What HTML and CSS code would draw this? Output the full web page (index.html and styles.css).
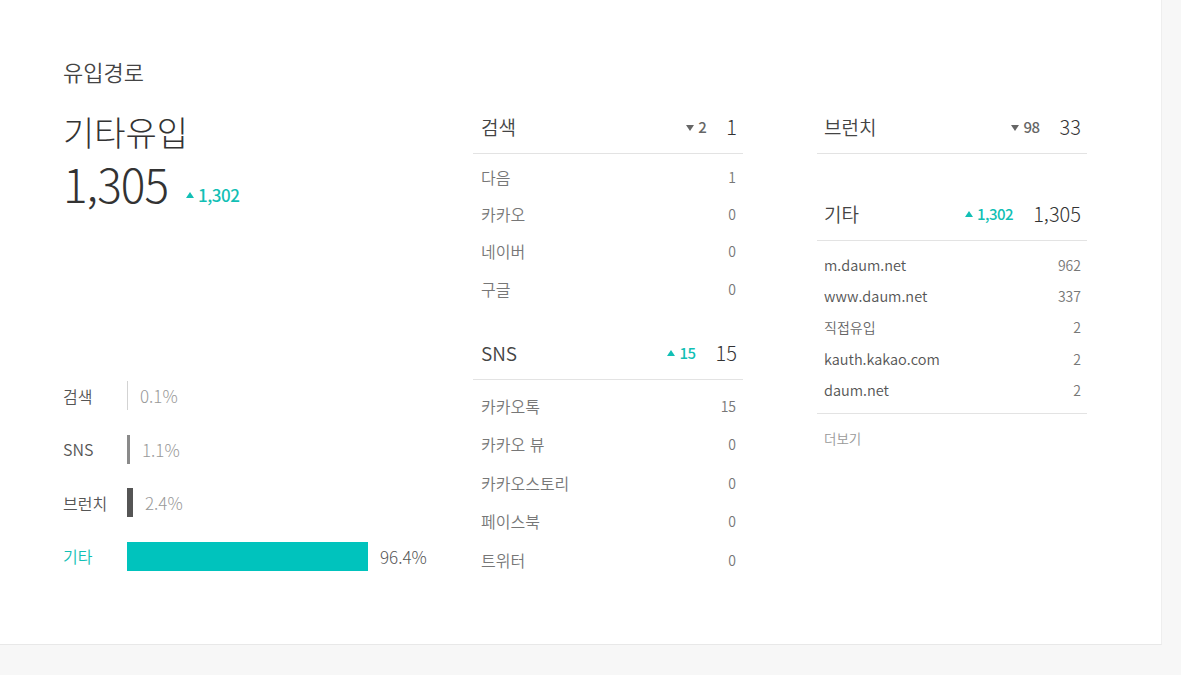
FILE: index.html
```html
<!DOCTYPE html>
<html lang="ko">
<head>
<meta charset="utf-8">
<title>유입경로</title>
<link rel="stylesheet" href="styles.css">
</head>
<body>
<div class="card">
  <h2 class="title">유입경로</h2>
  <div class="content">
    <div class="col-main">
      <div class="main-name">기타유입</div>
      <div class="main-num-row">
        <span class="main-num">1,305</span>
        <span class="delta up big">1,302</span>
      </div>
      <div class="chart">
        <div class="bar-row">
          <span class="bar-label">검색</span>
          <span class="bar b-search" style="width:1px"></span>
          <span class="bar-pct">0.1%</span>
        </div>
        <div class="bar-row">
          <span class="bar-label">SNS</span>
          <span class="bar b-sns" style="width:3px"></span>
          <span class="bar-pct">1.1%</span>
        </div>
        <div class="bar-row">
          <span class="bar-label">브런치</span>
          <span class="bar b-brunch" style="width:6px"></span>
          <span class="bar-pct">2.4%</span>
        </div>
        <div class="bar-row active">
          <span class="bar-label">기타</span>
          <span class="bar b-etc" style="width:241px"></span>
          <span class="bar-pct">96.4%</span>
        </div>
      </div>
    </div>

    <div class="col-list">
      <div class="section">
        <div class="sec-head">
          <span class="sec-name">검색</span>
          <span class="delta down">2</span>
          <span class="sec-val">1</span>
        </div>
        <ul class="rows rows-search">
          <li><span>다음</span><span class="num">1</span></li>
          <li><span>카카오</span><span class="num">0</span></li>
          <li><span>네이버</span><span class="num">0</span></li>
          <li><span>구글</span><span class="num">0</span></li>
        </ul>
      </div>
      <div class="section sec-gap">
        <div class="sec-head">
          <span class="sec-name">SNS</span>
          <span class="delta up">15</span>
          <span class="sec-val">15</span>
        </div>
        <ul class="rows rows-sns">
          <li><span>카카오톡</span><span class="num">15</span></li>
          <li><span>카카오 뷰</span><span class="num">0</span></li>
          <li><span>카카오스토리</span><span class="num">0</span></li>
          <li><span>페이스북</span><span class="num">0</span></li>
          <li><span>트위터</span><span class="num">0</span></li>
        </ul>
      </div>
    </div>

    <div class="col-list col-right">
      <div class="section">
        <div class="sec-head">
          <span class="sec-name">브런치</span>
          <span class="delta down">98</span>
          <span class="sec-val">33</span>
        </div>
      </div>
      <div class="section sec-gap2">
        <div class="sec-head">
          <span class="sec-name">기타</span>
          <span class="delta up">1,302</span>
          <span class="sec-val">1,305</span>
        </div>
        <ul class="rows rows-sm">
          <li><span class="site">m.daum.net</span><span class="num">962</span></li>
          <li><span class="site">www.daum.net</span><span class="num">337</span></li>
          <li><span>직접유입</span><span class="num">2</span></li>
          <li><span class="site">kauth.kakao.com</span><span class="num">2</span></li>
          <li><span class="site">daum.net</span><span class="num">2</span></li>
        </ul>
        <div class="more">더보기</div>
      </div>
    </div>
  </div>
</div>
</body>
</html>
```

FILE: styles.css
```css
* { box-sizing: border-box; }
html, body { margin: 0; padding: 0; }
body {
  background: #f7f7f7;
  font-family: "Noto Sans CJK KR", "Noto Sans", sans-serif;
  color: #333;
  height: 675px;
  overflow: hidden;
}
.card {
  width: 1162px;
  height: 645px;
  background: #fff;
  border-right: 1px solid #eeeeee;
  border-bottom: 1px solid #e8e8e8;
  padding: 56px 0 0 63px;
}
.title {
  margin: 0;
  font-size: 22px;
  font-weight: 350;
  line-height: 30px;
  color: #444;
}
.content {
  display: flex;
  margin-top: 16px;
}
.col-main {
  width: 410px;
  padding-top: 7px;
}
.main-name {
  font-size: 34px;
  font-weight: 300;
  line-height: 46px;
  color: #333;
}
.main-num-row {
  display: flex;
  align-items: center;
  gap: 18px;
  height: 56px;
}
.main-num {
  font-size: 46px;
  font-weight: 300;
  line-height: 56px;
  color: #333;
  letter-spacing: -1px;
}
.delta {
  font-size: 15px;
  font-weight: 500;
  line-height: 20px;
  letter-spacing: -0.5px;
  display: inline-flex;
  align-items: center;
}
.delta.big {
  font-size: 17px;
  margin-top: 24px;
}
.delta::before {
  content: "";
  display: inline-block;
  width: 0;
  height: 0;
  border-left: 4px solid transparent;
  border-right: 4px solid transparent;
  margin-right: 4px;
}
.delta.up { color: #12bfb5; }
.delta.up::before { border-bottom: 6px solid #12bfb5; }
.delta.down { color: #666; }
.delta.down::before { border-top: 6px solid #666; margin-top: 1px; }

.chart {
  margin-top: 170px;
  display: flex;
  flex-direction: column;
  gap: 24.67px;
}
.bar-row {
  display: flex;
  align-items: center;
  height: 29px;
}
.bar-label {
  width: 64px;
  font-size: 16px;
  font-weight: 350;
  color: #555;
}
.bar {
  height: 29px;
  display: block;
}
.b-search { background: #d3d3d3; }
.b-sns { background: #8a8a8a; }
.b-brunch { background: #555; }
.b-etc { background: #00c3bd; }
.bar-pct {
  margin-left: 12px;
  font-size: 17px;
  font-weight: 300;
  color: #999;
}
.bar-row.active .bar-label { color: #12bfb5; }
.bar-row.active .bar-pct { color: #555; }

.col-list {
  width: 270px;
}
.col-right {
  margin-left: 74px;
}
.sec-head {
  display: flex;
  align-items: center;
  padding: 11px 6px 12px 8px;
  border-bottom: 1px solid #e3e3e3;
  line-height: 28px;
}
.col-right .sec-head { padding-left: 7px; padding-right: 6px; }
.sec-name {
  flex: 1;
  font-size: 19px;
  font-weight: 350;
  color: #444;
}
.sec-val {
  margin-left: 20px;
  font-size: 20px;
  font-weight: 300;
  color: #333;
}
.sec-gap { margin-top: 21px; }
.sec-gap2 { margin-top: 35px; }
.rows {
  list-style: none;
  margin: 0;
  padding: 0 7px 0 8px;
}
.rows li {
  display: flex;
  justify-content: space-between;
  align-items: center;
}
.rows-search { padding-top: 4px; }
.rows-search li { height: 37.33px; }
.rows-sns { padding-top: 6px; }
.rows-sns li { height: 38.5px; }
.rows-search li, .rows-sns li {
  font-size: 16px;
  font-weight: 350;
  color: #777;
}
.rows-search .num, .rows-sns .num { font-size: 14px; font-weight: 350; color: #777; }
.rows-sm {
  padding: 8px 6px 8px 7px;
  border-bottom: 1px solid #e3e3e3;
}
.rows-sm li {
  height: 31.3px;
  font-size: 14px;
  font-weight: 350;
  color: #666;
}
.rows-sm .site { font-size: 14.5px; color: #555; }
.rows-sm .num { font-size: 14px; color: #777; }
.more {
  padding: 14px 7px;
  font-size: 13.5px;
  font-weight: 350;
  color: #999;
}
```
